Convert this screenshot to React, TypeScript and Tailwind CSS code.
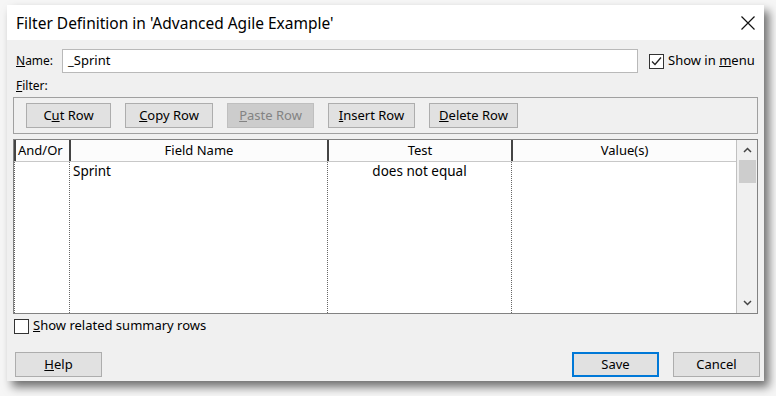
import React from "react"

const font = { fontFamily: '"Noto Sans", "Open Sans", sans-serif' }

function Btn({
  children,
  w = "w-[87px]",
  disabled = false,
  primary = false,
}: {
  children: React.ReactNode
  w?: string
  disabled?: boolean
  primary?: boolean
}) {
  let cls = "h-[25px] flex items-center justify-center text-[13px] border "
  if (disabled) cls += "bg-[#cccccc] border-[#bfbfbf] text-[#838383]"
  else if (primary) cls += "bg-[#e1e1e1] border-[#0078d7] border-2 text-black"
  else cls += "bg-[#e1e1e1] border-[#adadad] text-black"
  return <div className={cls + " " + w}>{children}</div>
}

function Check({ checked }: { checked?: boolean }) {
  return (
    <div className="w-[15px] h-[15px] border border-[#333] bg-white flex items-center justify-center">
      {checked && (
        <svg width="13" height="13" viewBox="0 0 13 13">
          <path d="M2 6.5 L5 9.5 L11 2.5" fill="none" stroke="#222" strokeWidth="1.3" />
        </svg>
      )}
    </div>
  )
}

export default function App() {
  return (
    <div className="w-[776px] h-[396px] bg-[#f6f6f6] overflow-hidden text-black" style={font}>
      <div className="ml-[7px] mt-[5px] w-[757px] h-[376px] bg-[#f0f0f0] flex flex-col shadow-[5px_6px_9px_rgba(0,0,0,0.55)]">
        {/* title bar */}
        <div className="h-[35px] bg-white flex items-center justify-between pl-[9px] pr-[8px]">
          <span className="text-[15.5px] pt-[2px]">Filter Definition in 'Advanced Agile Example'</span>
          <svg width="16" height="16" viewBox="0 0 16 16">
            <path d="M1.5 1.5 L14.5 14.5 M14.5 1.5 L1.5 14.5" stroke="#111" strokeWidth="1.2" />
          </svg>
        </div>

        {/* name row */}
        <div className="flex items-center mt-[9px] pl-[9px] pr-[8px] h-[24px]">
          <span className="text-[12px] w-[46px]">
            <u>N</u>ame:
          </span>
          <div className="w-[576px] h-[24px] bg-white border border-[#b9b9b9] flex items-center pl-[5px] text-[13px]">
            _Sprint
          </div>
          <div className="ml-[11px] flex items-center gap-[4px]">
            <Check checked />
            <span className="text-[13px]">
              Show in <u>m</u>enu
            </span>
          </div>
        </div>

        <div className="text-[12px] pl-[9px] mt-[5px] leading-[16px]">
          <u>F</u>ilter:
        </div>

        {/* toolbar */}
        <div className="mx-[6px] mt-[3px] h-[37px] border border-[#a0a0a0] flex items-center gap-[14px] pl-[12px]">
          <Btn w="w-[85px]">
            C<u>u</u>t Row
          </Btn>
          <Btn w="w-[88px]">
            <u>C</u>opy Row
          </Btn>
          <Btn w="w-[87px]" disabled>
            <u>P</u>aste Row
          </Btn>
          <Btn w="w-[87px]">
            <u>I</u>nsert Row
          </Btn>
          <Btn w="w-[89px]">
            <u>D</u>elete Row
          </Btn>
        </div>

        {/* table */}
        <div className="mx-[6px] mt-[5px] h-[175px] border border-[#828282] flex bg-white">
          <div className="flex-1 flex flex-col">
            <div className="h-[22px] flex border-b border-[#c8c8c8] text-[13px] bg-[#fcfcfc]">
              <div className="w-[55px] border-l-2 border-[#444] flex items-center pl-[2px]">And/Or</div>
              <div className="w-[258px] border-l-2 border-[#444] flex items-center justify-center">Field Name</div>
              <div className="w-[184px] border-l-2 border-[#444] flex items-center justify-center">Test</div>
              <div className="flex-1 border-l-2 border-[#444] flex items-center justify-center">Value(s)</div>
            </div>
            <div className="flex-1 flex text-[13.5px] leading-[18px]">
              <div className="w-[55px] border-l border-dotted border-[#666]" />
              <div className="w-[258px] border-l border-dotted border-[#666] pl-[3px]">Sprint</div>
              <div className="w-[184px] border-l border-dotted border-[#666] text-center">does not equal</div>
              <div className="flex-1 border-l border-dotted border-[#666]" />
            </div>
          </div>
          {/* scrollbar */}
          <div className="w-[21px] bg-[#f0f0f0] border-l border-[#c0c0c0] flex flex-col items-center">
            <div className="h-[20px] flex items-center justify-center">
              <svg width="9" height="6" viewBox="0 0 9 6">
                <path d="M1 5 L4.5 1.5 L8 5" fill="none" stroke="#444" strokeWidth="1.5" />
              </svg>
            </div>
            <div className="w-[17px] h-[23px] bg-[#cdcdcd]" />
            <div className="flex-1" />
            <div className="h-[20px] flex items-center justify-center">
              <svg width="9" height="6" viewBox="0 0 9 6">
                <path d="M1 1 L4.5 4.5 L8 1" fill="none" stroke="#444" strokeWidth="1.5" />
              </svg>
            </div>
          </div>
        </div>

        {/* related rows */}
        <div className="flex items-center gap-[4px] pl-[7px] mt-[4px] h-[16px]">
          <Check />
          <span className="text-[13px]">
            <u>S</u>how related summary rows
          </span>
        </div>

        {/* bottom buttons */}
        <div className="flex items-center mt-[18px] pl-[8px] pr-[4px]">
          <Btn>
            <u>H</u>elp
          </Btn>
          <div className="flex-1" />
          <Btn primary>Save</Btn>
          <div className="w-[14px]" />
          <Btn>Cancel</Btn>
        </div>
      </div>
    </div>
  )
}
